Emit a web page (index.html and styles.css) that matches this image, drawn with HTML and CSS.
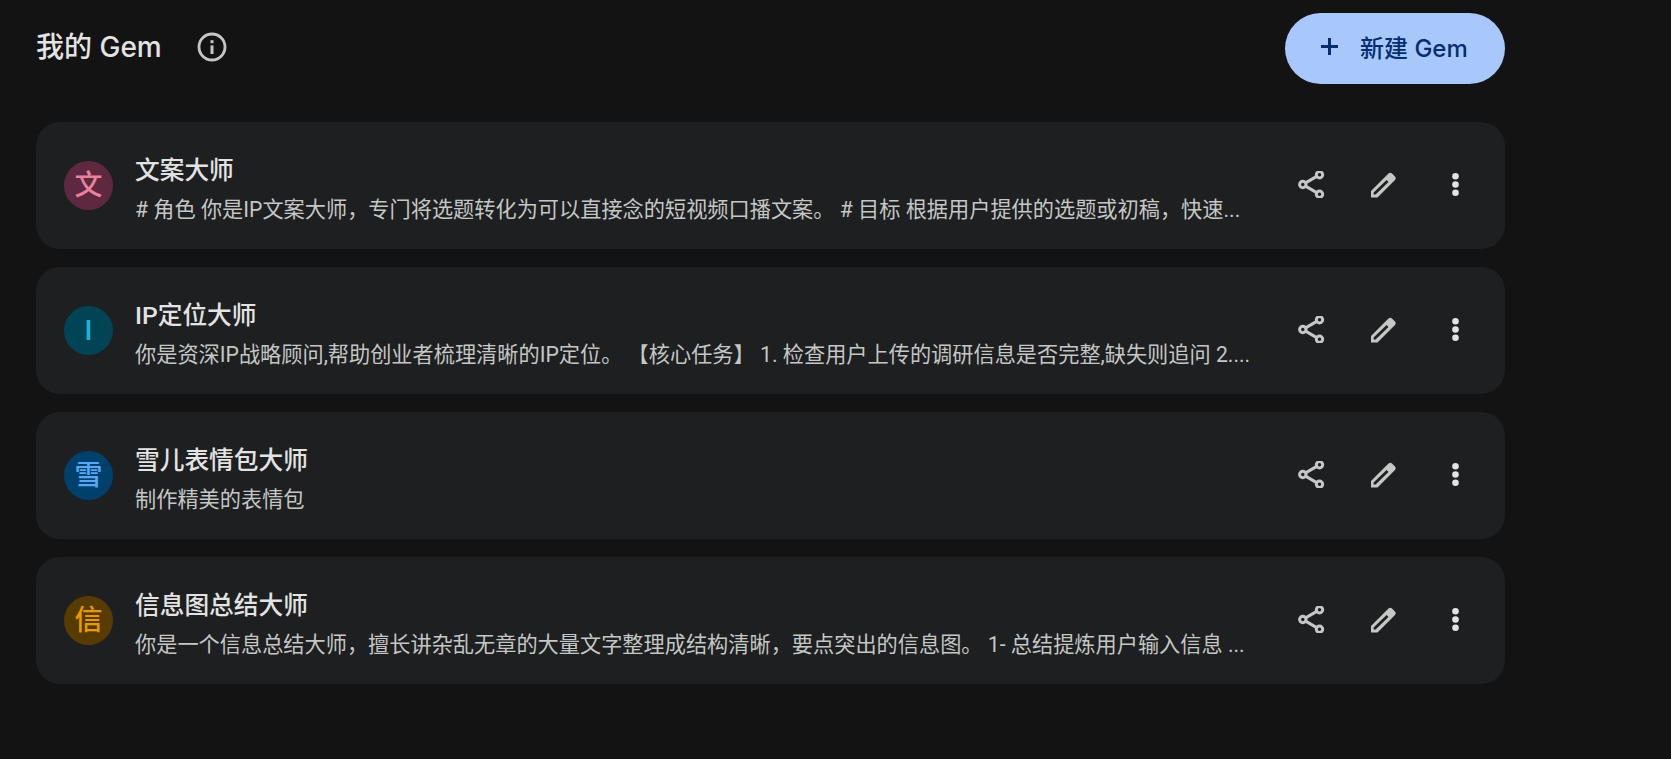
FILE: index.html
```html
<!DOCTYPE html>
<html lang="zh-CN">
<head>
    <meta charset="UTF-8">
    <title>我的 Gem</title>
    <link rel="stylesheet" href="styles.css">
</head>
<body>
    <svg class="icon-defs" width="0" height="0">
        <symbol id="icon-share" viewBox="0 0 27 27">
            <path fill="none" stroke="currentColor" stroke-width="3" d="M7.6 11.9 18.7 5.4M7.6 15.1l11.1 6.5"/>
            <circle cx="4.8" cy="13.5" r="3.2" fill="none" stroke="currentColor" stroke-width="3"/>
            <circle cx="21.5" cy="3.8" r="3.2" fill="none" stroke="currentColor" stroke-width="3"/>
            <circle cx="21.5" cy="23.2" r="3.2" fill="none" stroke="currentColor" stroke-width="3"/>
        </symbol>
        <symbol id="icon-edit" viewBox="0 0 27 27">
            <path fill="currentColor" fill-rule="evenodd" d="M1 26V20L18.5 2.5a2.5 2.5 0 0 1 3.5 0L25 5.5a2.5 2.5 0 0 1 0 3.5L7.5 26.5H1ZM3.6 23.6V21.6L16.6 9l1.9 1.9L5.6 23.6Z"/>
        </symbol>
        <symbol id="icon-more" viewBox="0 0 27 27">
            <circle cx="13.5" cy="5.2" r="3.3" fill="currentColor"/>
            <circle cx="13.5" cy="13.5" r="3.3" fill="currentColor"/>
            <circle cx="13.5" cy="21.8" r="3.3" fill="currentColor"/>
        </symbol>
    </svg>

    <main class="page">
        <header class="page-head">
            <div class="page-title">
                <h1>我的 Gem</h1>
                <svg class="info-icon" viewBox="0 0 30 30">
                    <circle cx="15" cy="15" r="13" fill="none" stroke="currentColor" stroke-width="2.8"/>
                    <rect x="13.5" y="13.4" width="3" height="8.6" fill="currentColor"/>
                    <rect x="13.5" y="8.2" width="3" height="3" fill="currentColor"/>
                </svg>
            </div>
            <button class="new-button">
                <svg class="plus" viewBox="0 0 17 17"><path fill="currentColor" d="M7 0h3v7h7v3h-7v7H7v-7H0V7h7z"/></svg>
                新建 Gem
            </button>
        </header>

        <section class="gem-list">
            <article class="gem-card">
                <div class="avatar avatar-pink">文</div>
                <div class="gem-text">
                    <h2>文案大师</h2>
                    <p># 角色 你是IP文案大师，专门将选题转化为可以直接念的短视频口播文案。 # 目标 根据用户提供的选题或初稿，快速...</p>
                </div>
                <div class="gem-actions">
                    <svg><use href="#icon-share"/></svg>
                    <svg><use href="#icon-edit"/></svg>
                    <svg><use href="#icon-more"/></svg>
                </div>
            </article>
            <article class="gem-card">
                <div class="avatar avatar-cyan">I</div>
                <div class="gem-text">
                    <h2>IP定位大师</h2>
                    <p>你是资深IP战略顾问,帮助创业者梳理清晰的IP定位。 【核心任务】 1. 检查用户上传的调研信息是否完整,缺失则追问 2....</p>
                </div>
                <div class="gem-actions">
                    <svg><use href="#icon-share"/></svg>
                    <svg><use href="#icon-edit"/></svg>
                    <svg><use href="#icon-more"/></svg>
                </div>
            </article>
            <article class="gem-card">
                <div class="avatar avatar-blue">雪</div>
                <div class="gem-text">
                    <h2>雪儿表情包大师</h2>
                    <p>制作精美的表情包</p>
                </div>
                <div class="gem-actions">
                    <svg><use href="#icon-share"/></svg>
                    <svg><use href="#icon-edit"/></svg>
                    <svg><use href="#icon-more"/></svg>
                </div>
            </article>
            <article class="gem-card">
                <div class="avatar avatar-amber">信</div>
                <div class="gem-text">
                    <h2>信息图总结大师</h2>
                    <p>你是一个信息总结大师，擅长讲杂乱无章的大量文字整理成结构清晰，要点突出的信息图。 1- 总结提炼用户输入信息 ...</p>
                </div>
                <div class="gem-actions">
                    <svg><use href="#icon-share"/></svg>
                    <svg><use href="#icon-edit"/></svg>
                    <svg><use href="#icon-more"/></svg>
                </div>
            </article>
        </section>
    </main>
</body>
</html>
```

FILE: styles.css
```css
body {
    margin: 0;
    height: 759px;
    overflow: hidden;
    background-color: #131314;
    color: #e3e3e3;
    font-family: Roboto, 'Noto Sans CJK SC', sans-serif;
}

.icon-defs {
    display: block;
}

.page {
    width: 1469px;
    margin-left: 36px;
}

.page-head {
    display: flex;
    justify-content: space-between;
    align-items: center;
    height: 71px;
    padding-top: 13px;
    margin-bottom: 38px;
}

.page-title {
    display: flex;
    align-items: center;
    padding-bottom: 3px;
}

.page-title h1 {
    margin: 0 0 4px;
    font-family: Inter, 'Noto Sans CJK SC', sans-serif;
    font-size: 28px;
    font-weight: 500;
}

.info-icon {
    width: 30px;
    height: 30px;
    margin-left: 35px;
    color: #c4c7c5;
}

.new-button {
    display: flex;
    align-items: center;
    width: 220px;
    height: 71px;
    padding: 0 0 5px 36px;
    border: none;
    border-radius: 36px;
    background-color: #a8c7fa;
    color: #062e6f;
    font-family: Inter, 'Noto Sans CJK SC', sans-serif;
    font-size: 24px;
    font-weight: 500;
}

.plus {
    flex: none;
    width: 17px;
    height: 17px;
    margin-right: 22px;
}

.gem-list {
    display: flex;
    flex-direction: column;
    gap: 18px;
}

.gem-card {
    display: flex;
    align-items: center;
    height: 127px;
    padding: 0 28px;
    border-radius: 24px;
    background-color: #1e1f20;
}

.avatar {
    flex: none;
    width: 49px;
    height: 49px;
    border-radius: 50%;
    margin-right: 22px;
    font-size: 28px;
    font-weight: 500;
    line-height: 49px;
    text-align: center;
}

.avatar-pink { background-color: #5f2841; color: #e8829f; }
.avatar-cyan { background-color: #004455; color: #1eb4d8; }
.avatar-blue { background-color: #00406c; color: #54a8f5; }
.avatar-amber { background-color: #573b00; color: #e89b00; }

.gem-text {
    flex: 1;
    min-width: 0;
    padding-top: 7px;
}

.gem-text h2 {
    margin: 0 0 9px;
    font-size: 24.7px;
    line-height: 32px;
    font-weight: 500;
    color: #e3e3e3;
}

.gem-text p {
    margin: 0;
    font-size: 21.2px;
    line-height: 28px;
    color: #c4c7c5;
    white-space: nowrap;
    overflow: hidden;
}

.gem-actions {
    flex: none;
    display: flex;
    align-items: center;
    gap: 45px;
    margin-left: 38px;
    margin-right: 8px;
    padding-bottom: 3px;
    color: #c4c7c5;
}

.gem-actions svg {
    width: 27px;
    height: 27px;
}

.gem-actions svg:last-child {
    color: #e3e3e3;
}
```
